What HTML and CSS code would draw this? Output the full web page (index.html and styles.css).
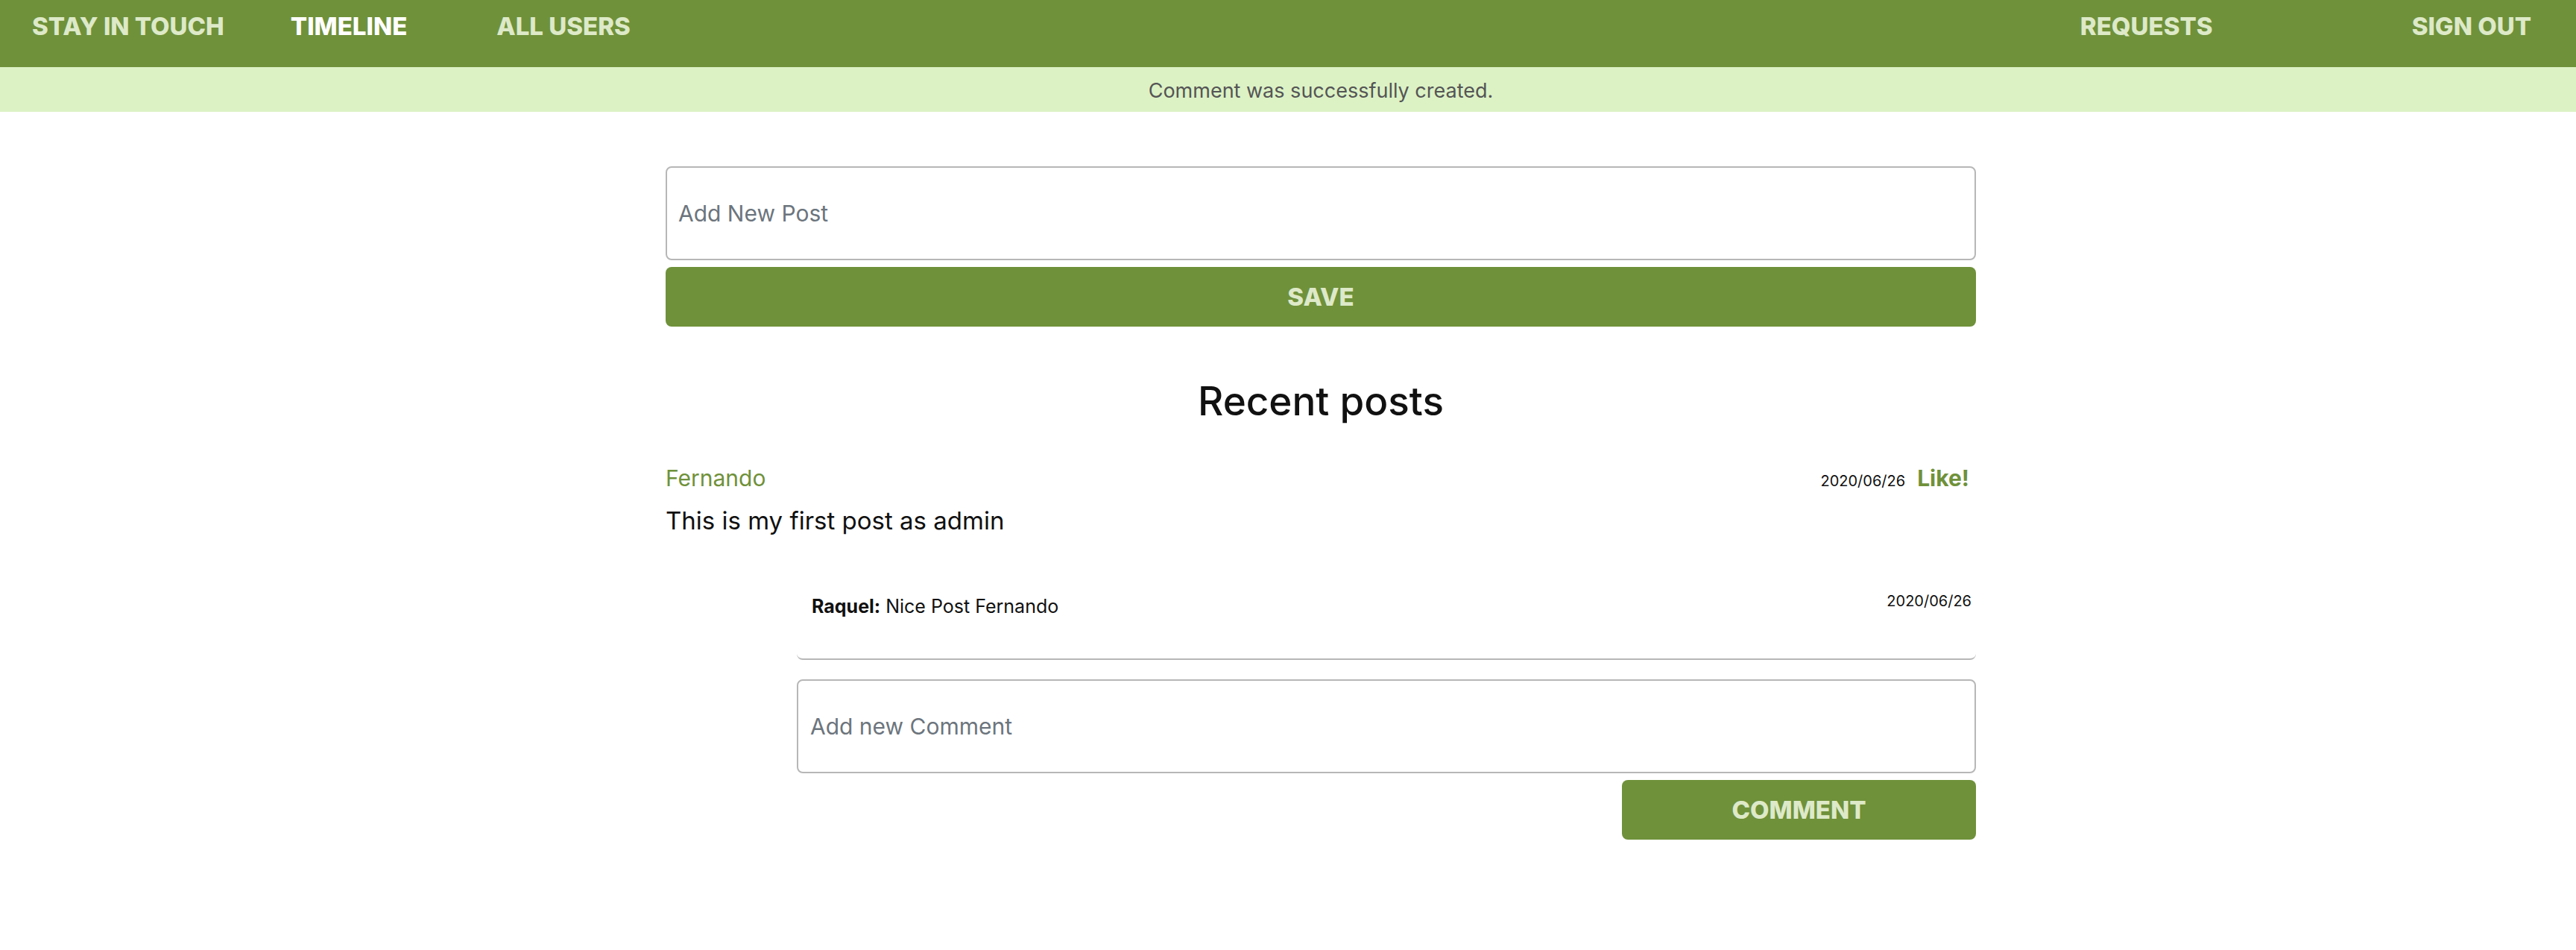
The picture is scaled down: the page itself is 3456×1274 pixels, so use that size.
FILE: index.html
```html
<!DOCTYPE html>
<html lang="en">
<head>
<meta charset="utf-8">
<title>Stay in touch</title>
<link rel="stylesheet" href="styles.css">
</head>
<body>
<nav class="nav">
  <a class="nav-link brand" href="#">STAY IN TOUCH</a>
  <a class="nav-link active timeline" href="#">TIMELINE</a>
  <a class="nav-link users" href="#">ALL USERS</a>
  <a class="nav-link requests" href="#">REQUESTS</a>
  <a class="nav-link signout" href="#">SIGN OUT</a>
</nav>
<div class="alert">
  <p class="alert-text">Comment was successfully created.</p>
</div>
<div class="page">
  <main class="container">
    <form class="post-form">
      <input class="field" type="text" placeholder="Add New Post">
      <button class="btn btn-block" type="button">SAVE</button>
    </form>
    <h3 class="title">Recent posts</h3>
    <article class="post">
      <div class="post-head">
        <a class="author" href="#">Fernando</a>
        <span class="date">2020/06/26</span>
        <a class="like" href="#">Like!</a>
      </div>
      <p class="post-body">This is my first post as admin</p>
      <div class="comments">
        <div class="comment">
          <p class="comment-text"><strong>Raquel:</strong> Nice Post Fernando</p>
          <span class="date">2020/06/26</span>
        </div>
        <form class="comment-form">
          <input class="field" type="text" placeholder="Add new Comment">
          <button class="btn btn-comment" type="button">COMMENT</button>
        </form>
      </div>
    </article>
  </main>
</div>
</body>
</html>
```
FILE: styles.css
```css
* { box-sizing: border-box; }
body {
  margin: 0;
  font-family: Inter, "Noto Sans", sans-serif;
  color: #212529;
  background: #fff;
}
.nav {
  height: 90px;
  background: #6f913a;
  display: flex;
  align-items: flex-start;
  padding: 18px 60px 0 43px;
}
.nav-link,
.btn {
  font-family: Inter, "Liberation Sans", sans-serif;
  font-weight: 800;
  font-size: 33px;
}
.nav-link {
  line-height: 34px;
  color: #dde9c8;
  text-decoration: none;
  white-space: nowrap;
}
.nav-link.active { color: #ffffff; }
.timeline { margin-left: 89px; }
.users { margin-left: 120px; }
.requests { margin-left: auto; }
.signout { margin-left: 267px; }

.alert {
  height: 60px;
  background: #dcf2c5;
  padding: 15px 0 0 88px;
}
.alert-text {
  margin: 0;
  text-align: center;
  font-size: 27px;
  line-height: 34px;
  color: #555;
}
.page { padding-left: 88px; }
.container {
  width: 1758px;
  margin: 0 auto;
}
.post-form {
  margin: 73px 0 0;
  display: flex;
  flex-direction: column;
}
.field {
  display: block;
  width: 100%;
  height: 126px;
  border: 2px solid #b7b7b7;
  border-radius: 8px;
  padding: 0 15px;
  font-family: Inter, "Noto Sans", sans-serif;
  font-size: 30px;
  color: #495057;
  background: #fff;
  outline: none;
}
.field::placeholder { color: #6c757d; }
.btn {
  margin-top: 9px;
  height: 80px;
  border: none;
  border-radius: 8px;
  background: #6f913a;
  color: #dde9c8;
  padding: 0;
  cursor: pointer;
}
.btn-block { width: 100%; }
.title {
  margin: 68px 0 0;
  text-align: center;
  font-size: 53px;
  line-height: 64px;
  font-weight: 500;
  color: #111;
}
.post-head {
  margin-top: 53px;
  display: flex;
  align-items: baseline;
  line-height: 36px;
}
.author {
  font-size: 30px;
  color: #6f913a;
  text-decoration: none;
  margin-right: auto;
}
.date {
  font-size: 20px;
  line-height: 24px;
  color: #111;
}
.post-head .date { margin-right: 16px; }
.like {
  font-size: 30px;
  font-weight: 700;
  color: #6f913a;
  text-decoration: none;
  margin-right: 9px;
}
.post-body {
  margin: 19px 0 0;
  font-size: 33px;
  line-height: 40px;
  color: #111;
}
.comments {
  margin-left: 176px;
  display: flex;
  flex-direction: column;
}
.comment {
  margin-top: 60px;
  display: flex;
  align-items: flex-start;
  justify-content: space-between;
  padding: 16px 6px 55px 20px;
  border-bottom: 2px solid #b7b7b7;
  border-radius: 8px;
}
.comment-text {
  margin: 4px 0 0;
  font-size: 25px;
  line-height: 30px;
  color: #111;
}
.comment-text strong { font-weight: 700; }
.comment-form {
  margin-top: 26px;
  display: flex;
  flex-direction: column;
}
.comment-form .field { padding: 0 16px; }
.btn-comment {
  width: 475px;
  align-self: flex-end;
}
```
